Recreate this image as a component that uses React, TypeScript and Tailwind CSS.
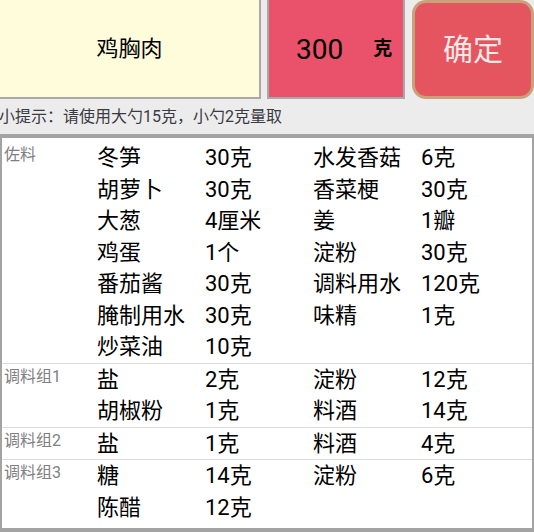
import React from "react"

type Item = [string, string]

interface Section {
  label: string
  rows: [Item, Item | null][]
}

const sections: Section[] = [
  {
    label: "佐料",
    rows: [
      [["冬笋", "30克"], ["水发香菇", "6克"]],
      [["胡萝卜", "30克"], ["香菜梗", "30克"]],
      [["大葱", "4厘米"], ["姜", "1瓣"]],
      [["鸡蛋", "1个"], ["淀粉", "30克"]],
      [["番茄酱", "30克"], ["调料用水", "120克"]],
      [["腌制用水", "30克"], ["味精", "1克"]],
      [["炒菜油", "10克"], null],
    ],
  },
  {
    label: "调料组1",
    rows: [
      [["盐", "2克"], ["淀粉", "12克"]],
      [["胡椒粉", "1克"], ["料酒", "14克"]],
    ],
  },
  {
    label: "调料组2",
    rows: [[["盐", "1克"], ["料酒", "4克"]]],
  },
  {
    label: "调料组3",
    rows: [
      [["糖", "14克"], ["淀粉", "6克"]],
      [["陈醋", "12克"], null],
    ],
  },
]

const font = { fontFamily: "Roboto, 'Noto Sans CJK SC', sans-serif" }

export default function App() {
  return (
    <div className="w-[534px] h-[532px] bg-[#ececec] overflow-hidden flex flex-col" style={font}>
      {/* top bar */}
      <div className="flex h-[99px] shrink-0">
        <div className="w-[261px] bg-[#fffcdb] border-r-2 border-b-2 border-[#a9a9a9] flex items-center justify-center text-[22px] text-black">
          鸡胸肉
        </div>
        <div className="ml-[6px] w-[138px] bg-[#e9526a] border-x-2 border-b-2 border-[#a9a9a9] flex items-center pl-[27px]">
          <span className="text-[28px] text-black leading-none mt-[2px]">300</span>
          <span className="ml-[30px] text-[19px] font-bold text-black leading-none">克</span>
        </div>
        <button className="ml-[7px] w-[122px] h-[99px] rounded-[14px] border-[3px] border-[#c9a27a] bg-[#e5555f] text-[30px] text-[#f8e9e9] flex items-center justify-center">
          确定
        </button>
      </div>

      {/* hint */}
      <div className="h-[35px] shrink-0 flex items-center text-[16px] text-[#3a3a44] -ml-[1px]">
        小提示：请使用大勺15克，小勺2克量取
      </div>

      {/* ingredient table */}
      <div className="flex-1 bg-white border-t-4 border-x-2 border-b-4 border-[#a3a3a3] flex flex-col">
        {sections.map((sec, i) => (
          <div
            key={sec.label}
            className={`flex ${i === 0 ? "pt-[4px]" : ""} ${i < sections.length - 1 ? "border-b-[1.5px] border-[#dcdcdc]" : ""}`}
          >
            <div className="w-[95px] shrink-0 pl-[2px] pt-[2px] text-[16px] leading-[22px] text-[#808080]">{sec.label}</div>
            <div className="flex flex-col">
              {sec.rows.map((row, j) => (
                <div key={j} className="flex h-[31.5px] items-center text-[22px] text-black">
                  {row.map((cell, k) => (
                    <React.Fragment key={k}>
                      <span className="w-[108px] whitespace-nowrap">{cell ? cell[0] : ""}</span>
                      <span className="w-[108px] whitespace-nowrap">{cell ? cell[1] : ""}</span>
                    </React.Fragment>
                  ))}
                </div>
              ))}
            </div>
          </div>
        ))}
      </div>
    </div>
  )
}
